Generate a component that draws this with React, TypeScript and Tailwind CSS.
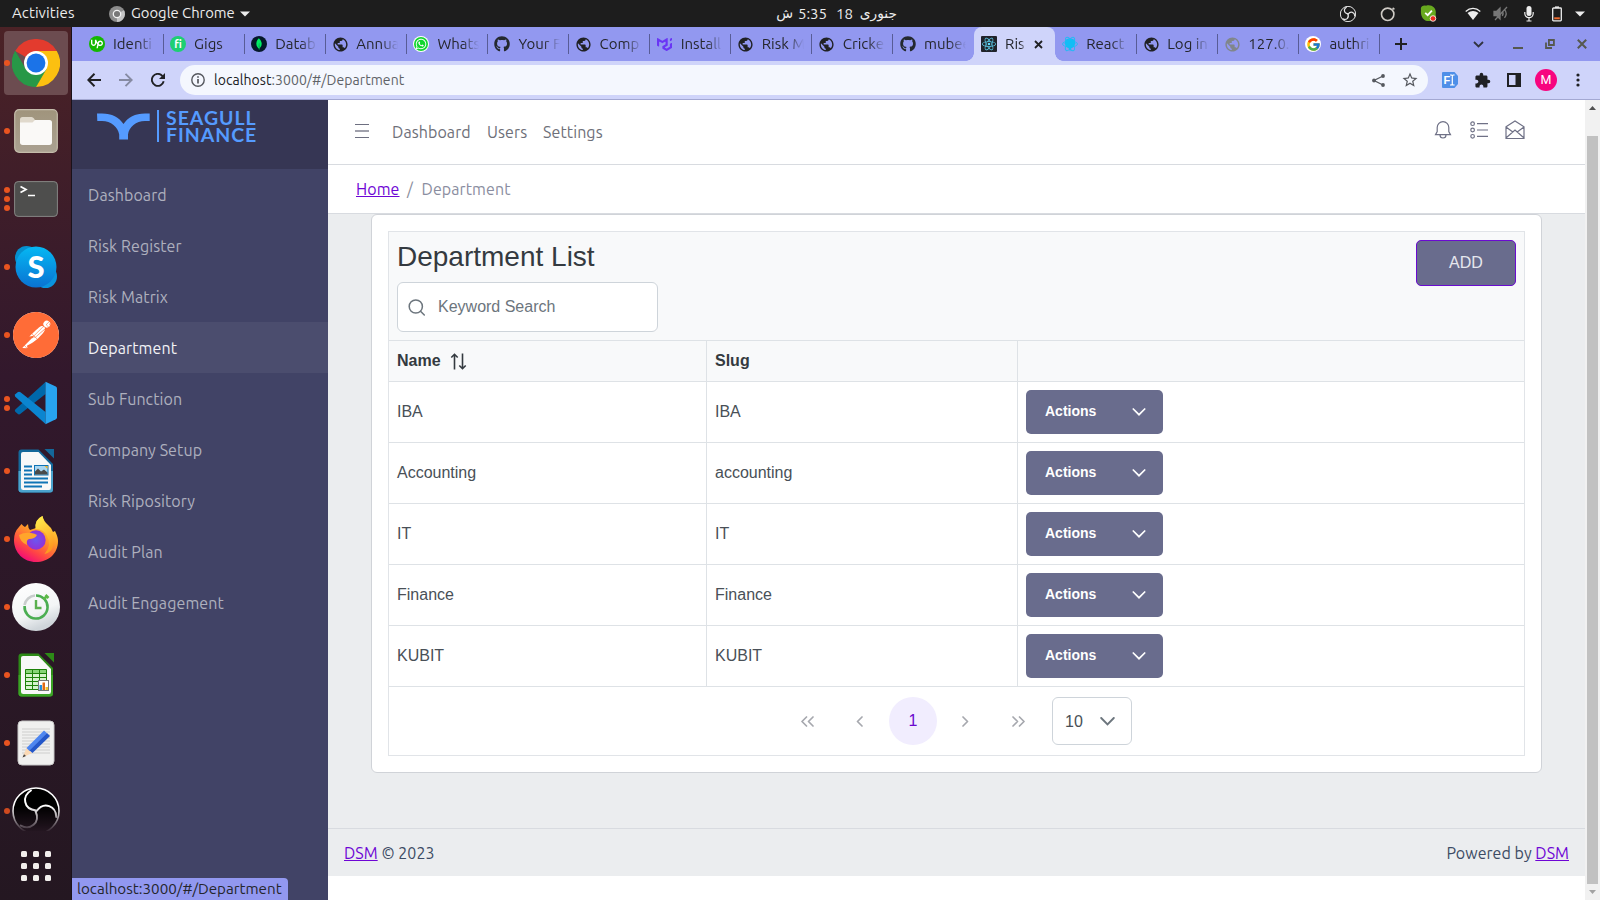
import React from 'react';
import { FaGithub, FaWhatsapp } from 'react-icons/fa';
import { FcGoogle } from 'react-icons/fc';
import { SiUpwork, SiMongodb, SiMui, SiPostman, SiReact } from 'react-icons/si';
import { MdPublic, MdExtension, MdStarBorder } from 'react-icons/md';

const UI = "font-['Ubuntu','Noto_Sans',sans-serif]";
const ARIAL = "font-['Liberation_Sans',Arial,sans-serif]";

/* ---------- desktop top bar ---------- */

function ObsMark({ size, bg = '#000', line = '#fff', w = 1.6 }: { size: number; bg?: string; line?: string; w?: number }) {
  return (
    <svg width={size} height={size} viewBox="0 0 48 48">
      <circle cx="24" cy="24" r="23" fill={bg} stroke={line} strokeWidth={w} />
      <g fill="none" stroke={line} strokeWidth={w * 1.2} strokeLinecap="round">
        <path d="M19 3.5C10 9 11 22 24 23.5" />
        <path d="M19 3.5C10 9 11 22 24 23.5" transform="rotate(120 24 24)" />
        <path d="M19 3.5C10 9 11 22 24 23.5" transform="rotate(240 24 24)" />
      </g>
    </svg>
  );
}

function Slot({ className, children }: { className: string; children: React.ReactNode }) {
  return <div className={`flex shrink-0 items-center justify-center ${className}`}>{children}</div>;
}

function TopBar() {
  return (
    <div className={`flex h-[27px] shrink-0 items-center bg-[#1d1d1d] text-[15px] text-[#ececec] ${UI}`}>
      <div className="w-[109px] shrink-0 pl-3 tracking-[0.1px]">Activities</div>
      <svg className="shrink-0" width="16" height="16" viewBox="0 0 16 16">
        <circle cx="8" cy="8" r="8" fill="#8c8c8c" />
        <path d="M8 8 15 4.3A8 8 0 0 1 8 16Z" fill="#c4c4c4" />
        <circle cx="8" cy="8" r="3.7" fill="#777" stroke="#f2f2f2" strokeWidth="1.3" />
      </svg>
      <div className="ml-1.5 w-[109px] shrink-0 whitespace-nowrap text-[14.8px]">Google Chrome</div>
      <svg className="shrink-0" width="10" height="6" viewBox="0 0 10 6"><path d="M0 .5h10L5 5.5Z" fill="#ececec" /></svg>
      <div dir="rtl" className="ml-[524px] flex w-[123px] shrink-0 items-center whitespace-nowrap leading-none">
        <span className="w-[44px] font-['DejaVu_Sans',sans-serif] text-[13.8px]">جنوری</span>
        <span className="w-[26px]">18</span>
        <span className="w-[34px]">5:35</span>
        <span className="font-['DejaVu_Sans',sans-serif] text-[13.8px]">ش</span>
      </div>
      <div className="ml-[431px] flex items-center">
        <Slot className="w-10"><ObsMark size={16} bg="#1a1a1a" line="#e4e4e4" w={3} /></Slot>
        <Slot className="w-10">
          <svg width="16" height="16" viewBox="0 0 16 16" fill="none" stroke="#cfcbc5" strokeWidth="1.6"><circle cx="7.7" cy="8.3" r="6.2" /><path d="m12.6 2 1.8 1.3" /></svg>
        </Slot>
        <Slot className="w-10">
          <svg width="17" height="17" viewBox="0 0 17 17">
            <path d="M1 5C0 1 4 0 6 .8c6-2 11 3 9.6 8.4C17 14 14 17 10.5 15.8 4 17 .3 12 1 5Z" fill="#68a91f" />
            <path d="m5.2 7.8 2.5 2.4 4.2-4.5" fill="none" stroke="#fff" strokeWidth="1.8" />
            <circle cx="13" cy="13.5" r="2.8" fill="#ea2a1f" stroke="#fff" strokeWidth=".8" />
          </svg>
        </Slot>
        <Slot className="ml-[11px] w-7">
          <svg width="16" height="14" viewBox="0 0 16 14"><path d="M.7 4.5C5 .4 11 .4 15.3 4.5" fill="none" stroke="#eee" strokeWidth="1.3" /><path d="M2.5 6c3.4-2.7 7.6-2.7 11 0L8 13Z" fill="#eee" /></svg>
        </Slot>
        <Slot className="w-7">
          <svg width="16" height="15" viewBox="0 0 16 15" fill="none" stroke="#777" strokeWidth="1.3"><path d="M1 5.5h2.5L7 2v11L3.5 9.5H1Z" fill="#777" /><path d="M9.3 5c1 1.500 1 3.500 0 5M11.500 3.300c2 2.500 2 6 0 8.500M2 14 14 1" /></svg>
        </Slot>
        <Slot className="w-7">
          <svg width="10" height="17" viewBox="0 0 10 17"><rect x="2.500" y="1" width="5" height="10" rx="2.500" fill="#eee" /><path d="M.8 7v1.500a4.200 4.200 0 0 0 8.400 0V7M5 13v3M2.500 16h5" fill="none" stroke="#eee" strokeWidth="1.200" /></svg>
        </Slot>
        <Slot className="w-7">
          <svg width="10" height="16" viewBox="0 0 10 16"><rect x=".7" y="2" width="8.600" height="12.800" rx=".8" fill="none" stroke="#eee" strokeWidth="1.300" /><path d="M3 .4h4v1.500H3Z" fill="#eee" /><path d="M2.200 11.300h5.600v2H2.200Z" fill="#ee6a2e" /></svg>
        </Slot>
        <Slot className="w-[18px]"><svg width="10" height="6" viewBox="0 0 10 6"><path d="M0 .5h10L5 5.500Z" fill="#ececec" /></svg></Slot>
      </div>
    </div>
  );
}

/* ---------- dock ---------- */

function ChromeIcon() {
  return (
    <svg width="48" height="48" viewBox="0 0 48 48">
      <path d="M24 24 3.200 12A24 24 0 0 1 44.800 12Z" fill="#e33b2e" />
      <path d="M24 24V12h20.800A24 24 0 0 1 24 48Z" fill="#fcc010" />
      <path d="M24 48A24 24 0 0 1 3.200 12L13.600 30 34.400 30Z" fill="#279847" />
      <path d="m13.600 30 20.800 0L24 48Z" fill="#fcc010" />
      <path d="M3.200 12 13.600 30 24 36 34.400 30 24 48A24 24 0 0 1 3.200 12Z" fill="#279847" />
      <circle cx="24" cy="24" r="12" fill="#fff" />
      <circle cx="24" cy="24" r="9.400" fill="#1b73e8" />
    </svg>
  );
}

function FilesIcon() {
  return (
    <svg width="44" height="44" viewBox="0 0 44 44">
      <defs><linearGradient id="files" x2="0" y2="1"><stop stopColor="#a0947c" /><stop offset="1" stopColor="#aaa191" /></linearGradient></defs>
      <rect x=".7" y=".7" width="42.600" height="42.600" rx="4.500" fill="url(#files)" stroke="#c4bcaa" strokeWidth="1.200" />
      <path d="M6 34V10.500Q6 8 8.500 8h9Q19 8 20 9.500l1.500 2.500H34v18Z" fill="#e0d9cc" />
      <path d="M6 13.500h12.500L21 11h14.500Q38 11 38 13.500v19.800q0 2.700-2.700 2.700H8.700Q6 36 6 33.300Z" fill="#faf9f7" />
    </svg>
  );
}

function TerminalIcon() {
  return (
    <svg width="44" height="36" viewBox="0 0 44 36">
      <rect x=".6" y=".6" width="42.800" height="34.800" rx="3.500" fill="#4e4e4d" stroke="#868684" strokeWidth="1" />
      <path d="m6.500 5.500 5.500 3-5.500 3M14 14.500h7" fill="none" stroke="#fff" strokeWidth="1.700" />
    </svg>
  );
}

function SkypeIcon() {
  return (
    <svg width="44" height="44" viewBox="0 0 44 44">
      <defs><linearGradient id="skype" x2="0" y2="1"><stop stopColor="#05b8f3" /><stop offset="1" stopColor="#0a72d2" /></linearGradient></defs>
      <circle cx="12.500" cy="12.500" r="11.500" fill="#0590cf" />
      <circle cx="31.500" cy="31.500" r="11.500" fill="#0a94de" />
      <circle cx="22" cy="22" r="20.500" fill="url(#skype)" />
      <text x="22" y="33" textAnchor="middle" fontFamily="Lato, sans-serif" fontWeight="900" fontSize="31" fill="#fff">S</text>
    </svg>
  );
}

function VsCodeIcon() {
  return (
    <svg width="44" height="44" viewBox="0 0 44 44">
      <path d="M1.300 28.500 31.500 1V13L6.500 32.800Q5 34 3.600 32.800L1.300 30.800Q.3 29.700 1.300 28.500Z" fill="#0068aa" />
      <path d="M31.500 43 1.300 15.800Q.3 14.500 1.300 13.300L3.600 11.200Q5 10.200 6.500 11.200L31.500 31Z" fill="#0b85d0" />
      <path d="M31.500.800 41.800 5.600Q43 6.300 43 7.500V36.500Q43 37.700 41.800 38.300L31.500 43.200Z" fill="#28a4f0" />
    </svg>
  );
}

function DocShape({ edge, edge2, children }: { edge: string; edge2: string; children: React.ReactNode }) {
  return (
    <svg width="38" height="46" viewBox="0 0 38 46">
      <path d="M4.500 1.500h17L36 16v25.500q0 3-3 3H4.500q-3 0-3-3v-37q0-3 3-3Z" fill={edge} />
      <path d="M1.500 23H36v18.500q0 3-3 3H4.500q-3 0-3-3Z" fill={edge2} />
      <path d="M27.500 1h9.500v9.500Z" fill={edge} />
      <path d="M6 4h15.500L34 17v22.500q0 2.500-2 2.500H6.500Q4 42 4 39.500V6q0-2 2-2Z" fill="#f8f8f8" />
      {children}
    </svg>
  );
}

function FirefoxIcon() {
  return (
    <svg width="46" height="48" viewBox="0 0 46 48">
      <defs>
        <linearGradient id="fox" x1=".85" y1=".05" x2=".3" y2="1"><stop stopColor="#ffe63d" /><stop offset=".4" stopColor="#ff9d28" /><stop offset=".75" stopColor="#ff4545" /><stop offset="1" stopColor="#f1087a" /></linearGradient>
        <linearGradient id="foxTail" x2=".3" y2="1"><stop stopColor="#fff44f" /><stop offset="1" stopColor="#ff9a20" /></linearGradient>
        <radialGradient id="foxGlobe"><stop stopColor="#6b57f0" /><stop offset="1" stopColor="#9232d6" /></radialGradient>
      </defs>
      <path d="M8.500 9Q10 11 12 12l3-3q0 4 2 6l6-2Q22 4 29.500 1q1 5 5.500 9 4 3 5 7l2-1q3 6 3 10C45 39 35 47 23 47S1 38 1 25Q1 17 6 12Z" fill="url(#fox)" />
      <path d="M22.500 14Q21 5 29.500 1q0 5 5 9 8 8 6 20-2 8-9 9 8-9 2-19-3-6-11-6Z" fill="url(#foxTail)" />
      <circle cx="23" cy="25" r="9.700" fill="url(#foxGlobe)" />
      <path d="M6 20q5-3 12-2 4 .5 6 2-2 4-8 4-3 1-2 6-7-3-8-10Z" fill="#ffa52b" />
    </svg>
  );
}

function TimerIcon() {
  return (
    <svg width="48" height="48" viewBox="0 0 48 48">
      <defs><linearGradient id="timer" x2=".4" y2="1"><stop stopColor="#fff" /><stop offset=".7" stopColor="#f3f5f6" /><stop offset="1" stopColor="#cfd5da" /></linearGradient></defs>
      <circle cx="24" cy="24" r="24" fill="url(#timer)" />
      <g fill="none" strokeWidth="2.600">
        <path d="M12.500 22A11.500 11.500 0 0 1 23 12.500" stroke="#c9cdcd" />
        <path d="M24 12.500A11.500 11.500 0 1 1 12.600 23" stroke="#4bae52" />
        <path d="M24 17v8h5.500" stroke="#5ab04e" strokeWidth="2.400" />
        <path d="m31.500 16.500 3-3M33.500 12l3 3" stroke="#5bb947" />
      </g>
    </svg>
  );
}

function EditorIcon() {
  return (
    <svg width="38" height="46" viewBox="0 0 38 46">
      <rect x="1" y="1" width="36" height="44" rx="4" fill="#f0f0ef" stroke="#c8c8c8" />
      <path d="M5 9h28M5 12h28M5 15h28M5 18h28M5 21h28M5 24h28M5 27h28M5 30h28M5 33h28" stroke="#cacaca" strokeWidth=".9" />
      <path d="m5.500 37.500 4-9.500 5.500 5Z" fill="#fbd9b5" />
      <path d="m5.500 37.500 1.500-3.300 2 1.800Z" fill="#444" />
      <path d="M9.500 28 27 10.500l3 2.800L12.500 31Z" fill="#4e86f0" />
      <path d="M12.500 30.500 30 13l3 3-17.500 17Z" fill="#2457c9" />
    </svg>
  );
}

const dockApps: { dots: number; active?: boolean; icon: React.ReactNode }[] = [
  { dots: 1, active: true, icon: <ChromeIcon /> },
  { dots: 1, icon: <FilesIcon /> },
  { dots: 3, icon: <TerminalIcon /> },
  { dots: 1, icon: <SkypeIcon /> },
  { dots: 1, icon: <div className="rounded-full bg-white"><SiPostman size={46} color="#ff6c37" /></div> },
  { dots: 2, icon: <VsCodeIcon /> },
  {
    dots: 1,
    icon: (
      <DocShape edge="#14689a" edge2="#4ba3cd">
        <path d="M7 18.500h8M7 22.500h8M7 26.500h8M7 30.500h24M7 34.500h24M7 38.500h18" stroke="#0f74b5" strokeWidth="1.900" />
        <rect x="17.500" y="17.500" width="13.500" height="9.500" fill="#a9d7f2" stroke="#0f74b5" />
        <path d="M18 26.500v-3l3-3 3 3 3-2 3.500 3v2Z" fill="#4a4a4a" />
        <path d="M27.500 18h3v3Z" fill="#f0b52c" />
      </DocShape>
    ),
  },
  { dots: 1, icon: <FirefoxIcon /> },
  { dots: 1, icon: <TimerIcon /> },
  {
    dots: 1,
    icon: (
      <DocShape edge="#2d8a17" edge2="#3ba325">
        <path d="M8.500 17.500h21v20h-21Z" fill="#d5f3cb" />
        <path d="M8.500 17.500h21v3.500h-21Z" fill="#87d576" />
        <path d="M8.500 17.500h21v20h-21ZM8.500 21.500h21M8.500 25.500h21M8.500 29.500h21M8.500 33.500h21M15.500 17.500v20M22.500 17.500v20" fill="none" stroke="#1d8209" strokeWidth="1" />
        <rect x="21.500" y="28.500" width="10" height="10" fill="#fff" stroke="#777" />
        <path d="M22.500 33h2.500v5h-2.500Z" fill="#1d8fe0" />
        <path d="M25.500 30.500H28V38h-2.500Z" fill="#df6a16" />
        <path d="M28.500 35H31v3h-2.500Z" fill="#eec02a" />
      </DocShape>
    ),
  },
  { dots: 1, icon: <EditorIcon /> },
];

function Dots({ n }: { n: number }) {
  return (
    <div className="absolute left-0 top-0 flex h-full w-1.5 flex-col items-center justify-center gap-[3px]">
      {Array.from({ length: n }, (_, i) => <span key={i} className="size-1.5 shrink-0 rounded-full bg-[#e95420]" />)}
    </div>
  );
}

function Dock() {
  return (
    <div className="flex w-[72px] shrink-0 flex-col border-r border-[#1a1119] bg-linear-to-b from-[#4b2226] via-[#32182c] via-40% to-[#241721] pl-1 pt-1">
      <div className="flex flex-col gap-1">
        {dockApps.map((a, i) => (
          <div key={i} className={`relative flex size-16 items-center justify-center rounded ${a.active ? 'bg-[#6c4c50]' : ''}`}>
            <Dots n={a.dots} />
            {a.icon}
          </div>
        ))}
      </div>
      <div className="relative mt-1 flex h-[52px] w-16 items-start justify-center overflow-hidden pt-2">
        <div className="absolute left-0 top-[29px] size-1.5 rounded-full bg-[#cf4a1f]" />
        <div className="h-12 mask-b-from-40% mask-b-to-95%"><ObsMark size={48} /></div>
      </div>
      <div className="ml-[17px] mt-5 grid w-[30px] grid-cols-3 gap-1.5">
        {Array.from({ length: 9 }, (_, i) => <span key={i} className="size-1.5 rounded-[1.5px] bg-[#f2efed]" />)}
      </div>
    </div>
  );
}

/* ---------- browser chrome ---------- */

const globe = <MdPublic size={17} color="#202124" className="shrink-0" />;

const tabs: { title: string; icon: React.ReactNode; active?: boolean; noDivider?: boolean }[] = [
  { title: 'Identi', icon: <span className="flex size-4 items-center justify-center rounded-full bg-[#14b800]"><SiUpwork size={12} color="#fff" /></span> },
  { title: 'Gigs', icon: <span className="flex size-4 items-center justify-center rounded-full bg-[#1dcf73] text-[11px] font-bold leading-none text-white">fi</span> },
  { title: 'Datab', icon: <span className="flex size-4 items-center justify-center rounded-full bg-[#05182a]"><SiMongodb size={12} color="#00ed64" /></span> },
  { title: 'Annua', icon: globe },
  { title: 'Whats', icon: <span className="flex size-4 items-center justify-center rounded-full bg-white"><span className="flex size-3.5 items-center justify-center rounded-full bg-[#12d52f]"><FaWhatsapp size={12} color="#fff" /></span></span> },
  { title: 'Your F', icon: <FaGithub size={16} color="#24292f" /> },
  { title: 'Comp', icon: globe },
  { title: 'Install', icon: <SiMui size={15} color="#6a35f5" /> },
  { title: 'Risk M', icon: globe },
  { title: 'Cricke', icon: globe },
  { title: 'mubee', icon: <FaGithub size={16} color="#24292f" />, noDivider: true },
  { title: 'Ris', icon: <span className="flex size-4 items-center justify-center rounded-[1px] bg-[#20232a]"><SiReact size={14} color="#61dafb" /></span>, active: true },
  {
    title: 'React',
    icon: (
      <svg width="16" height="16" viewBox="0 0 16 16">
        <g fill="none" stroke="#25b9f5" strokeWidth=".9"><ellipse cx="8" cy="8" rx="7.500" ry="3" /><ellipse cx="8" cy="8" rx="7.500" ry="3" transform="rotate(60 8 8)" /><ellipse cx="8" cy="8" rx="7.500" ry="3" transform="rotate(120 8 8)" /></g>
        <path d="M4 3.500q4-2 8 0l1.500 4-2 3.500-2.500 1.500-1 3-1-3L4.500 11l-2-3.500Z" fill="#12bdf5" />
      </svg>
    ),
  },
  { title: 'Log in', icon: globe },
  { title: '127.0.', icon: <MdPublic size={17} color="#80868b" className="shrink-0" /> },
  { title: 'authri', icon: <span className="flex size-4 items-center justify-center rounded-full bg-white"><FcGoogle size={15} /></span> },
];

function TabStrip() {
  return (
    <div className={`flex h-[34px] shrink-0 items-center bg-[#9298f0] pl-[10px] text-[15px] text-[#25262c] ${UI}`}>
      {tabs.map((t, i) => (
        <div
          key={i}
          className={`relative flex h-full w-[81.1px] shrink-0 items-center pl-[7px] ${t.active ? 'rounded-t-lg bg-[#cfd4fa]' : ''}`}
        >
          {t.active && (
            <>
              <span className="absolute -left-2 bottom-0 size-2 bg-[radial-gradient(circle_at_0_0,transparent_7.5px,#cfd4fa_8px)]" />
              <span className="absolute -right-2 bottom-0 size-2 bg-[radial-gradient(circle_at_100%_0,transparent_7.5px,#cfd4fa_8px)]" />
            </>
          )}
          <span className="flex size-4 shrink-0 items-center justify-center">{t.icon}</span>
          <span className={`ml-2 shrink-0 whitespace-nowrap ${t.active ? 'w-[21px] mask-r-from-75%' : 'w-[42px] mask-r-from-60%'}`}>
            {t.title}
          </span>
          {t.active ? (
            <svg className="ml-2" width="9" height="9" viewBox="0 0 9 9"><path d="m1 1 7 7M8 1 1 8" stroke="#202124" strokeWidth="1.800" /></svg>
          ) : (
            !t.noDivider && <span className="ml-[7.5px] h-5 w-px bg-[#585c96]" />
          )}
        </div>
      ))}
      <Slot className="ml-[5.5px] w-8"><svg width="12" height="12" viewBox="0 0 12 12"><path d="M6 0v12M0 6h12" stroke="#202124" strokeWidth="2" /></svg></Slot>
      <Slot className="ml-[45.5px] w-8"><svg width="11" height="7" viewBox="0 0 11 7"><path d="m1 1 4.500 4.500L10 1" fill="none" stroke="#303340" strokeWidth="1.800" /></svg></Slot>
      <Slot className="ml-[7px] w-8"><svg width="10" height="10" viewBox="0 0 10 10"><path d="M0 9h10" stroke="#55584f" strokeWidth="2" /></svg></Slot>
      <Slot className="w-8"><svg width="10" height="10" viewBox="0 0 10 10"><path d="M3.900 1h5v5h-5ZM1 3.500V9h6" fill="none" stroke="#55584f" strokeWidth="1.800" /></svg></Slot>
      <Slot className="w-8"><svg width="10" height="10" viewBox="0 0 10 10"><path d="m.8.8 8.400 8.400M9.200.8.800 9.200" stroke="#55584f" strokeWidth="2" /></svg></Slot>
    </div>
  );
}

function Toolbar() {
  return (
    <div className={`flex h-[39px] shrink-0 items-center border-b border-[#a3a8d2] bg-[#cfd4fa] pl-1.5 ${UI}`}>
      <Slot className="w-8"><svg width="14" height="14" viewBox="0 0 14 14" fill="none" stroke="#202124" strokeWidth="2"><path d="M14 7H1.500M7.500.800 1.300 7l6.200 6.200" /></svg></Slot>
      <Slot className="w-8"><svg width="14" height="14" viewBox="0 0 14 14" fill="none" stroke="#868aa2" strokeWidth="1.900"><path d="M0 7h12.500M6.500.800 12.700 7l-6.200 6.200" /></svg></Slot>
      <Slot className="w-8">
        <svg width="14" height="14" viewBox="0 0 14 14"><path d="M12.700 8.300A6 6 0 1 1 11.300 2.800L12.500 4" fill="none" stroke="#202124" strokeWidth="1.900" /><path d="M14 0v6H8Z" fill="#202124" /></svg>
      </Slot>
      <div className="ml-1.5 flex h-[30px] w-[1248px] items-center rounded-full bg-[#f4f7fe] pl-[11px] text-[14px]">
        <svg width="14" height="14" viewBox="0 0 14 14" fill="none" stroke="#55585e" strokeWidth="1.400"><circle cx="7" cy="7" r="6.200" /><path d="M7 6v4.500M7 3.300v1.500" strokeWidth="1.700" /></svg>
        <span className="ml-[9px] tracking-[0.06px] text-[#5f6368]"><span className="text-[#202124]">localhost</span>:3000/#/Department</span>
        <div className="ml-auto flex items-center pr-0.5">
          <Slot className="w-8">
            <svg width="13" height="13" viewBox="0 0 13 13" fill="#55585e"><path d="M11 2 2 6.500 11 11" fill="none" stroke="#55585e" strokeWidth="1.300" /><circle cx="11" cy="2" r="1.900" /><circle cx="2" cy="6.500" r="1.900" /><circle cx="11" cy="11" r="1.900" /></svg>
          </Slot>
          <Slot className="w-8"><MdStarBorder size={18} color="#55585e" /></Slot>
        </div>
      </div>
      <Slot className="ml-1.5 w-8">
        <svg width="16" height="16" viewBox="0 0 16 16">
          <path d="M1 0h11.500L16 4v8l-3.500 4H1q-1 0-1-1V1q0-1 1-1Z" fill="#4f8fe8" />
          <text x="1.500" y="12" fontFamily="Liberation Sans, sans-serif" fontWeight="700" fontSize="11" fill="#fff">F</text>
          <path d="M8 3h1.500l.8.700.8-.7h1.500M8 13h1.500l.8-.7.8.7h1.500M10.300 3.500v9" fill="none" stroke="#fff" strokeWidth="1.200" />
        </svg>
      </Slot>
      <Slot className="w-8"><MdExtension size={17} color="#202124" /></Slot>
      <Slot className="w-8"><svg width="14" height="14" viewBox="0 0 14 14"><path d="M1 1h12v12H1Z" fill="none" stroke="#202124" strokeWidth="2" /><path d="M8.500 1H13v12H8.500Z" fill="#202124" /></svg></Slot>
      <Slot className="w-8"><span className="flex size-[22px] items-center justify-center rounded-full bg-[#f7057f] font-[Roboto,sans-serif] text-[12.5px] text-white">M</span></Slot>
      <Slot className="w-8"><svg width="4" height="14" viewBox="0 0 4 14" fill="#202124"><circle cx="2" cy="2" r="1.600" /><circle cx="2" cy="7" r="1.600" /><circle cx="2" cy="12" r="1.600" /></svg></Slot>
    </div>
  );
}

/* ---------- application ---------- */

const navItems = ['Dashboard', 'Risk Register', 'Risk Matrix', 'Department', 'Sub Function', 'Company Setup', 'Risk Ripository', 'Audit Plan', 'Audit Engagement'];

function Sidebar() {
  return (
    <aside className={`relative flex w-64 shrink-0 flex-col bg-[#414366] ${UI}`}>
      <div className="flex h-[69px] shrink-0 items-start bg-[#363654] pl-[25px] pt-[10px]">
        <svg className="mt-[3px] shrink-0" width="53" height="27" viewBox="0 0 53 27">
          <path d="M0 .5H5C15 .5 22 4.500 26.500 11 31 4.500 38 .5 48 .5h4.700V8H48c-9 0-16 6-17 13.500V26.500h-8.800V21.500C21 14 14 8 5 8H.3Z" fill="#559bff" />
        </svg>
        <span className="ml-[7px] h-8 w-[2px] shrink-0 bg-[#559bff]" />
        <span className="ml-[7px] font-[Lato,sans-serif] text-[19.5px] font-bold leading-[16.5px] text-[#559bff]">
          <span className="block tracking-[0.95px]">SEAGULL</span>
          <span className="block tracking-[0.95px]">FINANCE</span>
        </span>
      </div>
      <nav>
        {navItems.map((n) => (
          <div key={n} className={`flex h-[51px] items-center pl-4 text-[16px] tracking-[0.09px] ${n === 'Department' ? 'bg-[#4b4d6e] text-[#f3f3f6]' : 'text-[#aeb0be]'}`}>
            {n}
          </div>
        ))}
      </nav>
      <div className="absolute bottom-0 left-0 flex h-[22px] w-[216px] items-center rounded-tr bg-[#9298f0] pl-[5px] text-[15.2px] text-[#25262c]">
        localhost:3000/#/Department
      </div>
    </aside>
  );
}

function Header() {
  return (
    <header className={`flex h-[65px] shrink-0 items-center border-b border-[#d8dbe0] bg-white pl-[27px] text-[16px] tracking-[0.09px] text-[#6e7079] ${UI}`}>
      <svg className="-mt-0.5" width="14" height="14" viewBox="0 0 14 14"><path d="M0 .5h14M0 13.500h14" stroke="#6d6f80" /><path d="M0 7h14" stroke="#a0a1ac" strokeWidth="2" /></svg>
      <span className="ml-[23px] w-[95px]">Dashboard</span>
      <span className="w-14">Users</span>
      <span>Settings</span>
      <div className="ml-auto flex items-center pb-1 pr-[52px] text-[#6f7186]">
        <Slot className="w-9">
          <svg width="18" height="20" viewBox="0 0 18 20" fill="none" stroke="currentColor" strokeWidth="1.200"><path d="M3.200 7.500a5.800 5.800 0 0 1 11.600 0v4l1.700 3.200H1.500l1.700-3.200ZM6 15a3 3 0 0 0 6 0" /></svg>
        </Slot>
        <Slot className="w-9">
          <svg width="18" height="18" viewBox="0 0 18 18" fill="none" stroke="currentColor" strokeWidth="1.200"><circle cx="2.600" cy="2.700" r="1.800" /><circle cx="2.600" cy="9" r="1.800" /><circle cx="2.600" cy="15.300" r="1.800" /><path d="M7 2.700h11M7 9h11M7 15.300h11" /></svg>
        </Slot>
        <Slot className="w-9">
          <svg width="20" height="20" viewBox="0 0 20 20" fill="none" stroke="currentColor" strokeWidth="1.200"><path d="M1 6.800 10 1l9 5.800V18.500H1ZM1 7l6.800 5M19 7l-6.800 5M1.500 17.500 10 10l8.500 7.500" /></svg>
        </Slot>
      </div>
    </header>
  );
}

function Breadcrumb() {
  return (
    <div className={`flex h-[49px] shrink-0 items-center border-b border-[#d8dbe0] bg-white pl-7 text-[16px] tracking-[0.09px] ${UI}`}>
      <span className="w-[51px]"><a className="text-[#6e05d5] underline">Home</a></span>
      <span className="w-[14.5px] text-[#8a8d9c]">/</span>
      <span className="text-[#8a8da0]">Department</span>
    </div>
  );
}

const rows = [
  ['IBA', 'IBA'],
  ['Accounting', 'accounting'],
  ['IT', 'IT'],
  ['Finance', 'Finance'],
  ['KUBIT', 'KUBIT'],
];

function Chevrons({ d, w }: { d: string; w: number }) {
  return <svg width={w} height="11" viewBox={`0 0 ${w} 11`} fill="none" stroke="#a6a8ae" strokeWidth="1.700" strokeLinejoin="round" strokeLinecap="round"><path d={d} /></svg>;
}

function DataTable() {
  return (
    <div className={`flex flex-col border border-[#e1e4e8] text-[16px] text-[#495057] ${ARIAL}`}>
      <div className="flex h-[109px] items-start justify-between border-b border-[#dee2e6] bg-[#f8f9fa] px-2 pt-2">
        <div>
          <h2 className="h-[42px] text-[28px] leading-[34px] text-[#343a40]">Department List</h2>
          <div className="flex h-[50px] w-[261px] items-center rounded-md border border-[#ced4da] bg-white pl-[10px] text-[#6c757d]">
            <svg width="17" height="17" viewBox="0 0 17 17" fill="none" stroke="#6c757d" strokeWidth="1.500" strokeLinecap="round"><circle cx="7.800" cy="7.500" r="6.600" /><path d="m12.500 12.200 3.800 3.800" /></svg>
            <span className="ml-[13px]">Keyword Search</span>
          </div>
        </div>
        <button className="h-[46px] w-[100px] rounded-[5px] border border-[#6a0bd0] bg-[#696c8d] text-[#e6e7ee]">ADD</button>
      </div>
      <div className="grid grid-cols-[318px_311px_1fr] border-b border-[#dee2e6] bg-[#f8f9fa] font-bold text-[#343a40]">
        <div className="flex h-10 items-center border-r border-[#dee2e6] pl-2">
          Name
          <svg className="ml-[9.5px]" width="17" height="17" viewBox="0 0 17 17" fill="none" stroke="#343a40" strokeWidth="1.600"><path d="M4.500 16.500V1.500M1.300 4.500 4.500 1.300 7.700 4.500M12.500.5v15M9.300 12.500l3.200 3.200 3.200-3.200" /></svg>
        </div>
        <div className="flex items-center border-r border-[#dee2e6] pl-2">Slug</div>
        <div />
      </div>
      {rows.map(([name, slug]) => (
        <div key={name} className="grid h-[61px] grid-cols-[318px_311px_1fr] border-b border-[#dee2e6]">
          <div className="flex items-center border-r border-[#dee2e6] pl-2">{name}</div>
          <div className="flex items-center border-r border-[#dee2e6] pl-2">{slug}</div>
          <div className="flex items-center pl-2">
            <button className="flex h-11 w-[137px] items-center rounded-[5px] bg-[#696c8d] pl-[19px] text-[14px] font-bold text-white">
              <span className="w-[87px] pb-px text-left">Actions</span>
              <svg width="14" height="8" viewBox="0 0 14 8" fill="none" stroke="#fff" strokeWidth="1.700" strokeLinecap="round"><path d="m1.300 1 5.700 5.700L12.700 1" /></svg>
            </button>
          </div>
        </div>
      ))}
      <div className="flex h-[68px] items-center justify-center">
        <Slot className="w-[53px]"><Chevrons w={13} d="M5.500 1 1 5.500 5.500 10M12 1 7.500 5.500 12 10" /></Slot>
        <Slot className="w-[51px]"><Chevrons w={7} d="M6 1 1.500 5.500 6 10" /></Slot>
        <span className="ml-1 flex size-12 items-center justify-center rounded-full bg-[#f1edfe] text-[#6a08ce]">1</span>
        <Slot className="ml-0.5 w-[53px]"><Chevrons w={7} d="M1 1l4.500 4.500L1 10" /></Slot>
        <Slot className="w-[52px]"><Chevrons w={13} d="M1 1l4.500 4.500L1 10M7.500 1 12 5.500 7.500 10" /></Slot>
        <div className="ml-2 flex h-12 w-20 items-center rounded-md border border-[#ced4da] bg-white pl-3">
          <span className="w-[34.5px] pt-0.5">10</span>
          <svg width="15" height="9" viewBox="0 0 15 9" fill="none" stroke="#6c757d" strokeWidth="1.900" strokeLinecap="round"><path d="m1.200 1 6.300 6.300L13.800 1" /></svg>
        </div>
      </div>
    </div>
  );
}

function Scrollbar() {
  return (
    <div className="flex w-[15px] shrink-0 flex-col items-center bg-[#f1f1f1]">
      <svg className="mt-1.5 shrink-0" width="7" height="4" viewBox="0 0 7 4"><path d="M0 4h7L3.500 0Z" fill="#505050" /></svg>
      <div className="mt-[26px] h-[748px] w-[11px] shrink-0 bg-[#c1c1c1]" />
      <svg className="mt-1.5 shrink-0" width="7" height="4" viewBox="0 0 7 4"><path d="M0 0h7L3.500 4Z" fill="#a3a3a3" /></svg>
    </div>
  );
}

export default function App() {
  return (
    <div className="flex h-[900px] w-[1600px] flex-col overflow-hidden bg-white">
      <TopBar />
      <div className="flex min-h-0 flex-1">
        <Dock />
        <div className="flex min-w-0 flex-1 flex-col">
          <TabStrip />
          <Toolbar />
          <div className="flex min-h-0 flex-1">
            <Sidebar />
            <div className="flex min-w-0 flex-1 flex-col">
              <Header />
              <Breadcrumb />
              <main className="h-[614px] shrink-0 bg-[#ebedef] px-[43px]">
                <div className="h-[559px] rounded-md border border-[#d0d3d8] bg-white p-4">
                  <DataTable />
                </div>
              </main>
              <footer className={`flex h-12 shrink-0 items-center justify-between border-t border-[#d8dbe0] bg-[#ebedef] px-4 text-[16px] tracking-[0.03px] text-[#3c4b64] ${UI}`}>
                <span><a className="text-[#6e05d5] underline">DSM</a> © 2023</span>
                <span>Powered by <a className="text-[#6e05d5] underline">DSM</a></span>
              </footer>
            </div>
            <Scrollbar />
          </div>
        </div>
      </div>
    </div>
  );
}
